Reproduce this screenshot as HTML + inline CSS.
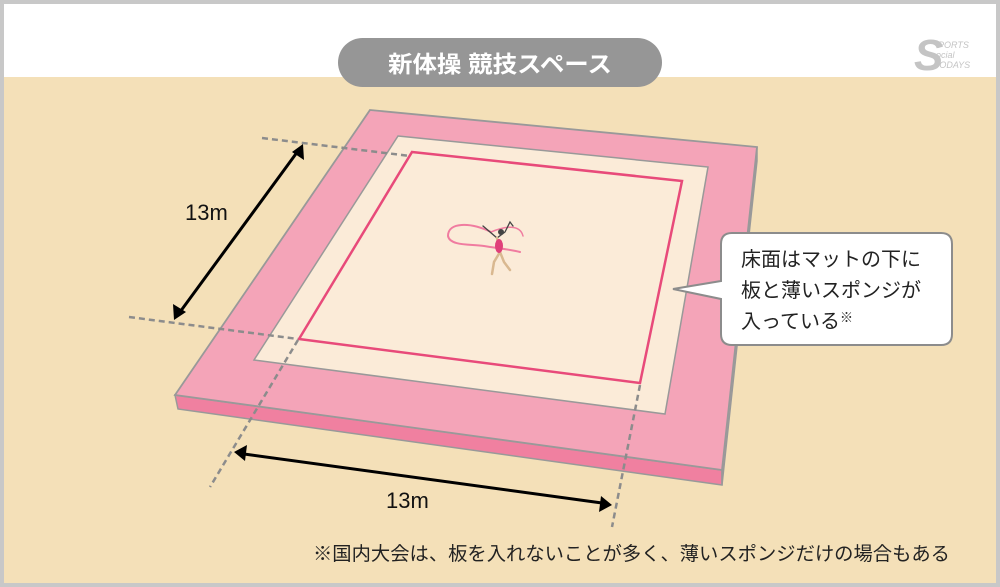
<!DOCTYPE html>
<html><head><meta charset="utf-8"><style>
html,body{margin:0;padding:0;background:#c8c8c8}
svg{display:block}
text{font-family:"Liberation Sans","Noto Sans CJK JP",sans-serif}
</style></head><body>
<svg width="1000" height="587" viewBox="0 0 1000 587" xmlns="http://www.w3.org/2000/svg">
<rect x="0" y="0" width="1000" height="587" fill="#c8c8c8"/>
<rect x="4" y="4" width="992" height="579" fill="#f4e0b8"/>
<rect x="4" y="4" width="992" height="73" fill="#ffffff"/>
<rect x="338" y="38" width="324" height="49" rx="24.5" fill="#969696"/>
<text x="388" y="72" font-size="23" font-weight="bold" fill="#fff" textLength="224" lengthAdjust="spacingAndGlyphs">新体操 競技スペース</text>
<g fill="#c4c4c4">
<text x="914" y="70" font-size="44" font-style="italic" font-weight="bold">S</text>
<text x="938" y="48" font-size="9" font-style="italic">PORTS</text>
<text x="936" y="58" font-size="9" font-style="italic">ocial</text>
<text x="934" y="68" font-size="9" font-style="italic">TODAYS</text>
</g>
<polygon points="175,395 722,470 722,485 178,409" fill="#f080a0" stroke="#999" stroke-width="1.5"/>
<polygon points="757,147 757,161 722,485 722,470" fill="#e8a0b4" stroke="#999" stroke-width="1.5"/>
<polygon points="370,110 757,147 722,470 175,395" fill="#f4a4b8" stroke="#999" stroke-width="1.8"/>
<polygon points="398,136 708,167 665,414 254,360" fill="#fbebd8" stroke="#999" stroke-width="1.5"/>
<polygon points="412,152 682,181 640,383 299,339" fill="none" stroke="#e84a7a" stroke-width="2.5"/>
<g stroke="#8c8c8c" stroke-width="2.5" stroke-dasharray="6,4" fill="none">
<line x1="262" y1="138" x2="410" y2="156"/>
<line x1="129" y1="317" x2="298" y2="339"/>
<line x1="298" y1="340" x2="210" y2="487"/>
<line x1="640" y1="385" x2="612" y2="527"/>
</g>
<g stroke="#000" stroke-width="3">
<line x1="298" y1="151" x2="180" y2="312"/>
<line x1="244" y1="454" x2="602" y2="503"/>
</g>
<polygon points="303,144 304,160 292,152" fill="#000"/>
<polygon points="174,320 173,304 186,312" fill="#000"/>
<polygon points="234,452 247,445 245,461" fill="#000"/>
<polygon points="612,505 601,496 599,512" fill="#000"/>
<text x="185" y="220" font-size="22" fill="#111">13m</text>
<text x="386" y="508" font-size="22" fill="#111">13m</text>
<g fill="none" stroke-linecap="round">
<path d="M491,232 C470,222 448,222 448,236 C450,246 470,244 484,246 C496,248 514,250 520,252" stroke="#f07ca0" stroke-width="2"/>
<path d="M491,232 C505,226 520,224 523,236" stroke="#f07ca0" stroke-width="1.5"/>
<path d="M483,226 L497,238 L505,232 L510,222 L513,226" stroke="#444" stroke-width="1.3"/>
<path d="M497,238 L500,252 L494,262 L492,274 M500,252 L504,262 L510,270" stroke="#d9b890" stroke-width="2.5"/>
</g>
<ellipse cx="499" cy="246" rx="4" ry="7" fill="#e0407a"/>
<circle cx="501" cy="232" r="3" fill="#444"/>
<path d="M732,233 H941 Q952,233 952,244 V334 Q952,345 941,345 H732 Q721,345 721,334 V299 L673,289 L721,281 V244 Q721,233 732,233 Z" fill="#fff" stroke="#8c8c8c" stroke-width="2"/>
<g font-size="20" fill="#222">
<text x="741" y="266">床面はマットの下に</text>
<text x="741" y="297">板と薄いスポンジが</text>
<text x="741" y="328">入っている<tspan font-size="13" dy="-6">※</tspan></text>
</g>
<text x="313" y="560" font-size="19" fill="#222" textLength="637" lengthAdjust="spacingAndGlyphs">※国内大会は、板を入れないことが多く、薄いスポンジだけの場合もある</text>
</svg>
</body></html>
